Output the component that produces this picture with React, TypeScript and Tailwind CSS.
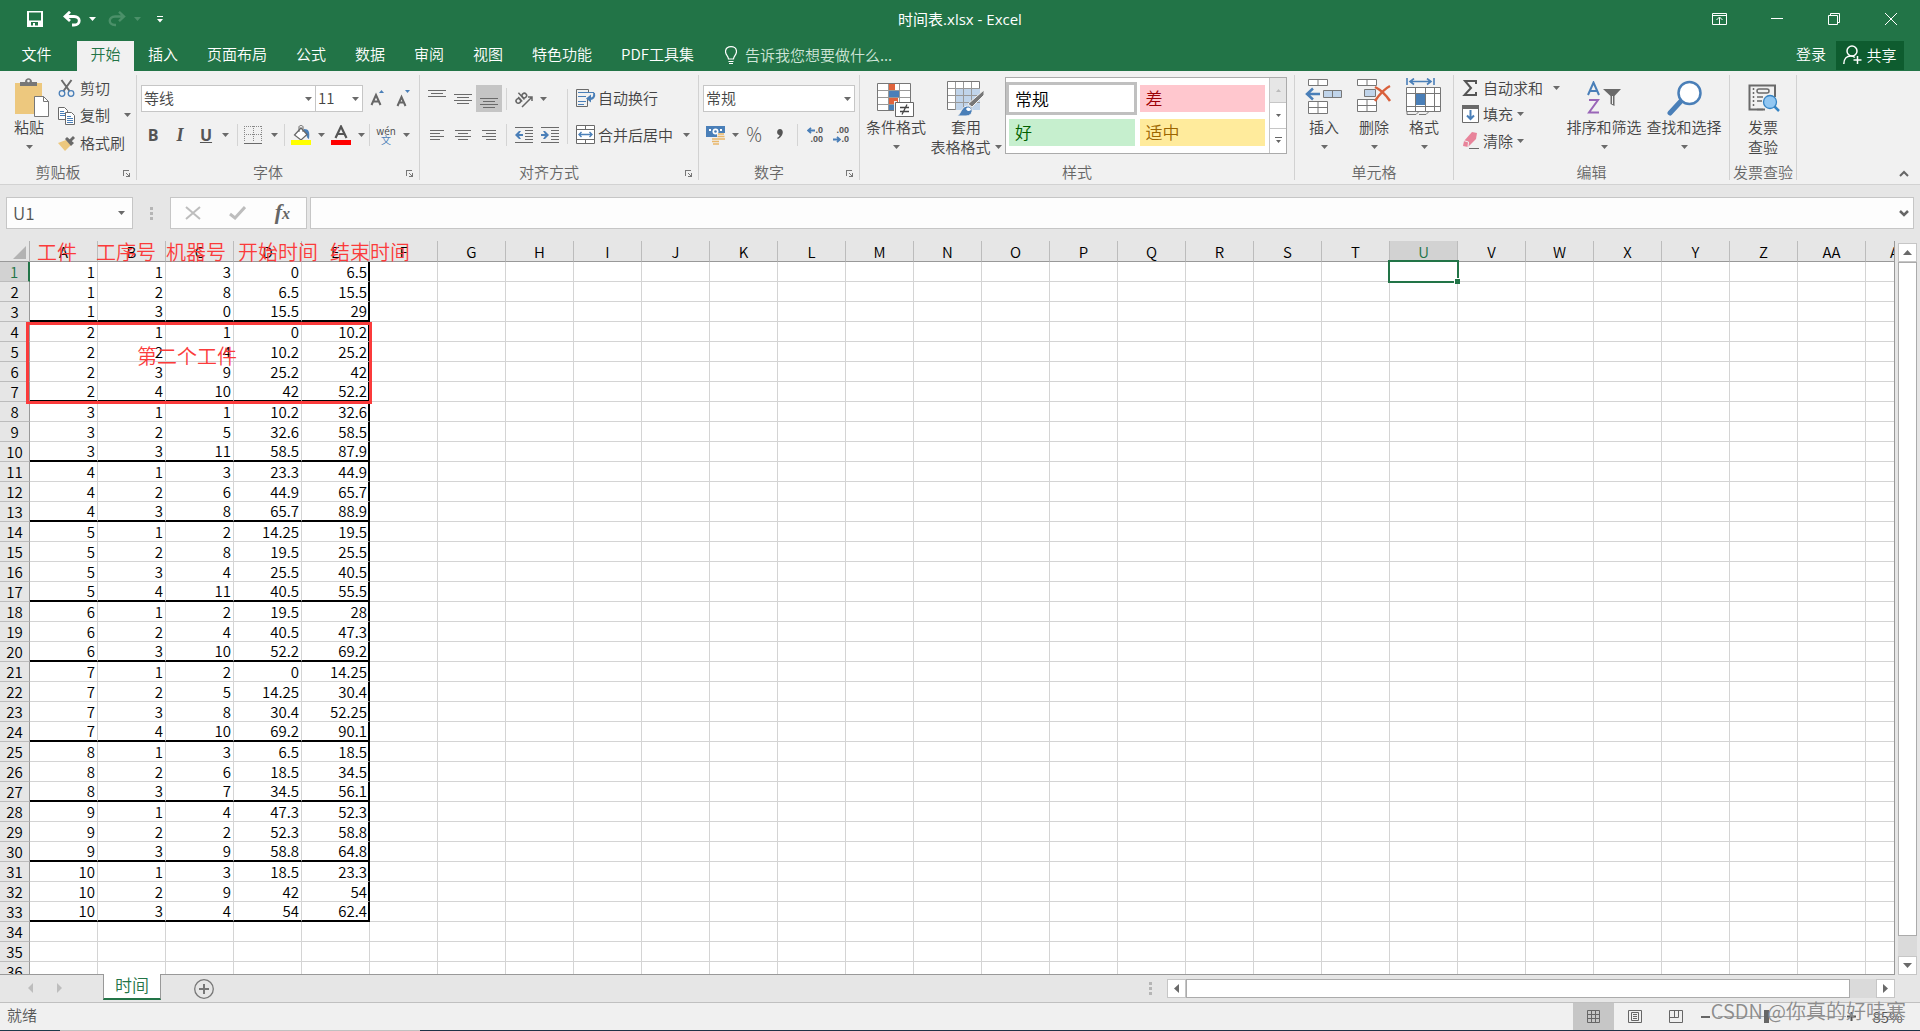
import type { ReactNode } from 'react';
import { clsx } from 'clsx';

type Job = [number, number, number, number, number];

const JOBS: Job[] = [
  [1, 1, 3, 0, 6.5],
  [1, 2, 8, 6.5, 15.5],
  [1, 3, 0, 15.5, 29],
  [2, 1, 1, 0, 10.2],
  [2, 2, 4, 10.2, 25.2],
  [2, 3, 9, 25.2, 42],
  [2, 4, 10, 42, 52.2],
  [3, 1, 1, 10.2, 32.6],
  [3, 2, 5, 32.6, 58.5],
  [3, 3, 11, 58.5, 87.9],
  [4, 1, 3, 23.3, 44.9],
  [4, 2, 6, 44.9, 65.7],
  [4, 3, 8, 65.7, 88.9],
  [5, 1, 2, 14.25, 19.5],
  [5, 2, 8, 19.5, 25.5],
  [5, 3, 4, 25.5, 40.5],
  [5, 4, 11, 40.5, 55.5],
  [6, 1, 2, 19.5, 28],
  [6, 2, 4, 40.5, 47.3],
  [6, 3, 10, 52.2, 69.2],
  [7, 1, 2, 0, 14.25],
  [7, 2, 5, 14.25, 30.4],
  [7, 3, 8, 30.4, 52.25],
  [7, 4, 10, 69.2, 90.1],
  [8, 1, 3, 6.5, 18.5],
  [8, 2, 6, 18.5, 34.5],
  [8, 3, 7, 34.5, 56.1],
  [9, 1, 4, 47.3, 52.3],
  [9, 2, 2, 52.3, 58.8],
  [9, 3, 9, 58.8, 64.8],
  [10, 1, 3, 18.5, 23.3],
  [10, 2, 9, 42, 54],
  [10, 3, 4, 54, 62.4],
];

const COLUMNS = [...'ABCDEFGHIJKLMNOPQRSTUVWXYZ', 'AA', 'AB'];
const ROW_COUNT = 36;
const ACTIVE_COLUMN = 'U';
const ACTIVE_ROW = 1;

const TABS = ['插入', '页面布局', '公式', '数据', '审阅', '视图', '特色功能', 'PDF工具集'];

/* ---------- small pieces ---------- */

function Caret({ className = 'text-[#6a6a6a]' }: { className?: string }) {
  return (
    <svg width="7" height="4" viewBox="0 0 7 4" className={clsx('shrink-0', className)} aria-hidden="true">
      <path d="M0 0h7L3.5 4z" fill="currentColor" />
    </svg>
  );
}

function CaretButton({ label, className = 'w-3' }: { label: string; className?: string }) {
  return (
    <button type="button" aria-label={label} className={clsx('flex h-6 shrink-0 items-center justify-center', className)}>
      <Caret />
    </button>
  );
}

function IconButton({
  label,
  className = 'w-[26px]',
  children,
}: {
  label: string;
  className?: string;
  children: ReactNode;
}) {
  return (
    <button
      type="button"
      aria-label={label}
      className={clsx('flex h-[27px] shrink-0 items-center justify-center', className)}
    >
      {children}
    </button>
  );
}

function Divider({ className = 'mx-1 h-[22px]' }: { className?: string }) {
  return <span className={clsx('w-px shrink-0 bg-[#d4d4d4]', className)} />;
}

function Group({
  title,
  launcher = false,
  className,
  children,
}: {
  title: string;
  launcher?: boolean;
  className: string;
  children: ReactNode;
}) {
  return (
    <section
      aria-label={title}
      className={clsx('flex h-[105px] shrink-0 flex-col border-r border-[#d2d2d2]', className)}
    >
      <div className="flex h-[87px] items-start">{children}</div>
      <div className="flex h-[18px] items-center pt-px">
        <span className="flex-1 text-center whitespace-nowrap text-[#666]">{title}</span>
        {launcher ? (
          <button type="button" aria-label={`${title}设置`} className="mr-[6px] ml-[7px] pt-1">
            <svg width="7" height="7" viewBox="0 0 7 7" fill="none" stroke="#777" shapeRendering="crispEdges">
              <path d="M.5 6V.5H6M3 3l3 3M6.5 3v3.5H3" />
            </svg>
          </button>
        ) : null}
      </div>
    </section>
  );
}

function BigButton({
  icon,
  lines,
  caret = 'below',
  className,
}: {
  icon: ReactNode;
  lines: string[];
  caret?: 'below' | 'inline' | 'none';
  className: string;
}) {
  return (
    <button type="button" className={clsx('flex shrink-0 flex-col items-center', className)}>
      <span className="flex h-[42px] items-end justify-center">{icon}</span>
      <span className="leading-[19px] whitespace-nowrap">{lines[0]}</span>
      <span className="flex h-[21px] items-center gap-1 leading-[21px] whitespace-nowrap">
        {lines[1]}
        {caret === 'none' ? null : <Caret />}
      </span>
    </button>
  );
}

function LineIcon({ lines, children }: { lines: Array<[number, number, number]>; children?: ReactNode }) {
  return (
    <svg width="18" height="18" viewBox="0 0 18 18" shapeRendering="crispEdges" aria-hidden="true">
      {lines.map(([x, y, w]) => (
        <rect key={`${x}-${y}`} x={x} y={y} width={w} height="1" fill="#6a6a6a" />
      ))}
      {children}
    </svg>
  );
}

/* ---------- icons ---------- */

function PasteIcon() {
  return (
    <svg width="36" height="39" viewBox="0 0 36 39" className="ml-[6px]">
      <path d="M1 5h27v31H1z" fill="#edc87e" />
      <path d="M6 8V4h5c0-5 7-5 7 0h5v4z" fill="#777" />
      <circle cx="14.500" cy="3" r="1.300" fill="#f1f1f1" />
      <path d="M20.500 18.500h9l5 5v15h-14z" fill="#fff" stroke="#777" />
      <path d="M29.500 18.500v5h5" fill="none" stroke="#777" />
    </svg>
  );
}

function ScissorsIcon() {
  return (
    <svg width="18" height="19" viewBox="0 0 18 19" fill="none">
      <path d="M3.500 1l8 11M13.500 1l-8 11" stroke="#6a6a6a" strokeWidth="2" />
      <circle cx="4" cy="14.500" r="2.800" stroke="#4a7fb8" strokeWidth="1.300" />
      <circle cx="13" cy="14.500" r="2.800" stroke="#4a7fb8" strokeWidth="1.300" />
    </svg>
  );
}

function CopyIcon() {
  return (
    <svg width="18" height="19" viewBox="0 0 18 19" fill="#fff" stroke="#6a6a6a">
      <path d="M.5 1.500h6l3 3v9h-9z" />
      <path d="M2 5.500h4M2 7.500h5M2 9.500h5" stroke="#4a7fb8" />
      <path d="M7.500 6.500h6l3 3v9h-9z" />
      <path d="M9 10.500h4M9 12.500h6M9 14.500h6M9 16.500h6" stroke="#4a7fb8" />
    </svg>
  );
}

function BrushIcon() {
  return (
    <svg width="18" height="16" viewBox="0 0 18 16">
      <path d="M0 8l8-3 5 5-6 6z" fill="#edc87e" />
      <path d="M7 4l2-2 7 6-3 3z" fill="#6a6a6a" />
      <path d="M11 5l4-4 2 2-4 4z" fill="#6a6a6a" />
    </svg>
  );
}

function FontSizeIcon({ up }: { up: boolean }) {
  return (
    <svg width="16" height="18" viewBox="0 0 16 18">
      <path
        d={up ? 'M3.500 15L8 5l4.500 10M5 11.500h6' : 'M3.500 16L7.500 7l4 9M5 12.500h5'}
        fill="none"
        stroke="#666"
        strokeWidth="2"
      />
      <path d={up ? 'M11 3h5l-2.500-3z' : 'M11 0h5l-2.500 3z'} fill="#4a7fb8" />
    </svg>
  );
}

function BorderIcon() {
  return (
    <svg width="18" height="18" viewBox="0 0 18 18" fill="none" stroke="#888" shapeRendering="crispEdges">
      <path d="M.5 0v16M17.500 0v16M9 0v16M0 .5h18M0 8.500h18" strokeDasharray="1 1" />
      <path d="M0 17h18" stroke="#6a6a6a" />
    </svg>
  );
}

function FillIcon() {
  return (
    <svg width="20" height="20" viewBox="0 0 20 20">
      <path d="M13 4c5 0 6 3 5 10-3-1-2-5-5-8z" fill="#4a7fb8" />
      <path d="M3.500 10L10 3l6 6.500-6 5.500z" fill="#fff" stroke="#666" strokeWidth="1.200" />
      <path d="M8 7V2c0-2 4-2 4 0v5" fill="none" stroke="#666" />
      <path d="M0 15h20v5H0z" fill="#ff0" />
    </svg>
  );
}

function FontColorIcon() {
  return (
    <svg width="20" height="20" viewBox="0 0 20 20">
      <path d="M4.500 13L10 1.500 15.500 13M6.500 9h7" fill="none" stroke="#555" strokeWidth="2.200" />
      <path d="M0 15h20v5H0z" fill="#f00" />
    </svg>
  );
}

function OrientationIcon() {
  return (
    <svg width="20" height="18" viewBox="0 0 20 18" fill="none" stroke="#666" strokeWidth="1.500">
      <g transform="rotate(-42 8 9)">
        <circle cx="4" cy="8" r="2.300" />
        <path d="M6.500 5v6M9.500 2v9" />
        <circle cx="12" cy="8" r="2.300" />
      </g>
      <path d="M8 17L18 7M14 7h4v4" />
    </svg>
  );
}

function IndentIcon({ out }: { out: boolean }) {
  return (
    <LineIcon
      lines={[
        [0, 1, 18],
        [10, 4, 8],
        [10, 7, 8],
        [10, 10, 8],
        [10, 13, 8],
        [0, 16, 18],
      ]}
    >
      <path
        d={out ? 'M0 9l4-4h2L4 8h4v2H4l2 3H4z' : 'M8 9L4 5H2l2 3H0v2h4l-2 3h2z'}
        fill="#4a7fb8"
        shapeRendering="auto"
      />
    </LineIcon>
  );
}

function WrapIcon() {
  return (
    <svg width="20" height="19" viewBox="0 0 20 19" fill="none">
      <path d="M12.500 3V.5H.5v17h11V10" stroke="#6a6a6a" />
      <path d="M2 3.500h16M2 7.500h8M2 12.500h8M2 15.500h6" stroke="#4a7fb8" />
      <path d="M18 4c1 4-1 6-5 6" stroke="#4a7fb8" strokeWidth="2" />
      <path d="M10 9.500l5-4v8z" fill="#4a7fb8" />
    </svg>
  );
}

function MergeIcon() {
  return (
    <svg width="20" height="19" viewBox="0 0 20 19" fill="#fff" stroke="#6a6a6a">
      <path d="M.5.5h18v18H.5zM.5 4.500h18M.5 14.500h18M9.500.5v4M9.500 14.500v4" />
      <path d="M3 9.500h13M5.500 7L3 9.500 5.500 12M13.500 7L16 9.500 13.500 12" fill="none" stroke="#4a7fb8" strokeWidth="1.400" />
    </svg>
  );
}

function MoneyIcon() {
  return (
    <svg width="20" height="20" viewBox="0 0 20 20">
      <path d="M0 1h19v11H0z" fill="#4a7fb8" />
      <path d="M3 4h2v2H3zM14 4h2v2h-2z" fill="#fff" />
      <circle cx="9.500" cy="6.500" r="3" fill="#fff" />
      <circle cx="9.500" cy="6.500" r="1.300" fill="#4a7fb8" />
      <path d="M11 8h8v11H5v-6h6z" fill="#f1f1f1" />
      <path d="M12 9h6M11.500 11.500h7M12 14h7M6 14h7M6 16.500h7M7 19h6" stroke="#e9b76a" strokeWidth="1.700" />
    </svg>
  );
}

function DecimalArrow({ left = false }: { left?: boolean }) {
  return (
    <svg width="8" height="7" viewBox="0 0 8 7">
      <path
        d={left ? 'M8 3.500H1M4 .8L1 3.500l3 2.700' : 'M0 3.500h7M4 .8l3 2.700-3 2.700'}
        fill="none"
        stroke="#4a7fb8"
        strokeWidth="1.800"
      />
    </svg>
  );
}

function DecimalIcon({ increase }: { increase: boolean }) {
  return (
    <span className="flex w-4 flex-col text-right font-['Liberation_Sans'] text-[9px] leading-[9px] font-bold text-[#555]">
      <span className="flex items-center justify-end">
        {increase ? <DecimalArrow left /> : null}
        {increase ? '.0' : '.00'}
      </span>
      <span className="flex items-center justify-end">
        {increase ? null : <DecimalArrow />}
        {increase ? '.00' : '.0'}
      </span>
    </span>
  );
}

function ConditionalIcon() {
  return (
    <svg width="38" height="34" viewBox="0 0 38 34">
      <path d="M.5.500h33v27H.5z" fill="#fff" stroke="#777" />
      <path d="M11.500 1v26M22.500 1v26M1 7.500h32M1 14.500h32M1 21.500h32" stroke="#999" />
      <path d="M12 1h6v6h-6zM12 15h9v6h-9z" fill="#e0633c" />
      <path d="M12 8h10v6H12zM12 22h5v5h-5z" fill="#4a7fb8" />
      <path d="M17 18h3v10h-3z" fill="#f1f1f1" />
      <path d="M18.500 19.500h18v14h-18z" fill="#fff" stroke="#666" />
      <path d="M23 24.500h9M23 28.500h9M30 21.500l-5 10" stroke="#444" strokeWidth="1.300" />
    </svg>
  );
}

function TableStyleIcon() {
  return (
    <svg width="38" height="36" viewBox="0 0 38 36">
      <path d="M.5.500h32v28H.5z" fill="#fff" stroke="#777" />
      <path d="M9 8h24v21H9z" fill="#c0d4ea" />
      <path d="M8.500 1v28M16.500 1v28M24.500 1v28M1 7.500h32M1 14.500h32M1 21.500h32" stroke="#999" />
      <path d="M37 9v5L25 26l-4-3z" fill="#777" stroke="#f1f1f1" />
      <path d="M10 35c4-1 4-11 12-10 5 2 4 10-3 10z" fill="#4a7fb8" stroke="#f1f1f1" />
      <path d="M19 28c2-3 5-1 5 1-2 2-4 1-5-1z" fill="#fff" />
    </svg>
  );
}

function InsertIcon() {
  return (
    <svg width="38" height="36" viewBox="0 0 38 36" fill="#fff" stroke="#777" className="mb-[2px]">
      <path d="M3.500.5h19v6h-19zM13 .5v6M3.500 22.500h19v12h-19zM13 22.500v12M3.500 28.500h19" />
      <path d="M18.500 11.500h18v7h-18zM27.500 11.500v7" fill="#c0d4ea" />
      <path d="M15 15H2M8 9.500L2 15l6 5.500" fill="none" stroke="#4a7fb8" strokeWidth="2.500" />
    </svg>
  );
}

function DeleteIcon() {
  return (
    <svg width="38" height="36" viewBox="0 0 38 36" fill="#fff" stroke="#777" className="mb-[2px]">
      <path d="M2.500.5h19v6h-19zM12 .5v6M2.500 20.500h19v12h-19zM12 20.500v12M2.500 26.500h19" />
      <path d="M9.500 10.500h11v7h-11z" fill="#c0d4ea" />
      <path d="M20 8c6 3 11 8 15 14M35 7c-6 3-11 9-15 15" fill="none" stroke="#d9603b" strokeWidth="2.500" />
    </svg>
  );
}

function FormatIcon() {
  return (
    <svg width="36" height="38" viewBox="0 0 36 38" fill="#fff" stroke="#777" className="mb-px">
      <path d="M1 0v7M28 0v7M4 3.500h21M8 .5l-4 3 4 3M21 .5l4 3-4 3" fill="none" stroke="#4a7fb8" strokeWidth="1.600" />
      <path d="M.5 9.500h34v24H.5zM9.500 9.500v24M19.500 9.500v24M28.500 9.500v24M.5 15.500h34M.5 28.500h34" />
      <path d="M10 16h9v11h-9z" fill="#4a7fb8" stroke="none" />
      <path d="M1 33.500v3h9l3-3M13 36.500h7l3-3" fill="none" />
    </svg>
  );
}

function SortIcon() {
  return (
    <svg width="36" height="34" viewBox="0 0 36 34" fill="none" className="mb-[2px]">
      <path d="M2 14L7.500 1.500 13 14M4 10h7" stroke="#4a7fb8" strokeWidth="2" />
      <path d="M3 19h9L3 31.500h10" stroke="#9a66b8" strokeWidth="2" />
      <path d="M17 8h18l-6.500 7v10l-4-2v-8z" fill="#6a6a6a" />
      <path d="M26.500 15v8" stroke="#f1f1f1" />
    </svg>
  );
}

function FindIcon() {
  return (
    <svg width="36" height="36" viewBox="0 0 36 36" className="mb-px ml-[2px]">
      <path d="M3 33l12-13" stroke="#4a7fb8" strokeWidth="5" strokeLinecap="round" />
      <circle cx="22.500" cy="13" r="11" fill="#fff" stroke="#4a7fb8" strokeWidth="2.500" />
    </svg>
  );
}

function InvoiceIcon() {
  return (
    <svg width="32" height="28" viewBox="0 0 32 28" fill="none" className="mb-[5px] ml-px">
      <path d="M27 13V1.500H1.500v24H17" stroke="#6a6a6a" strokeWidth="2" />
      <path d="M5.500 4v20" stroke="#6a6a6a" strokeWidth="1.500" strokeDasharray="2 2" />
      <rect x="9" y="5" width="12" height="4" rx="2" stroke="#6a6a6a" strokeWidth="1.500" />
      <path d="M9 13h6M9 17h5M9 25.500h6" stroke="#6a6a6a" strokeWidth="1.500" />
      <path d="M26 22l5 5" stroke="#3584c4" strokeWidth="2.500" />
      <circle cx="22" cy="18" r="6.500" fill="#92c7f2" stroke="#3584c4" strokeWidth="1.300" />
    </svg>
  );
}

/* ---------- window chrome ---------- */

function TitleBar() {
  return (
    <header className="flex h-[41px] shrink-0 items-center bg-[#227447] pb-[3px] text-white">
      <div className="flex flex-1 items-center">
        <button type="button" aria-label="保存" className="ml-[27px]">
          <svg width="16" height="16" viewBox="0 0 16 16">
            <path d="M0 0h16v16H0zM2 1.500v8h12v-8zM4 11v3.500h2V12h2v2.500h3V11z" fill="#fff" fillRule="evenodd" />
          </svg>
        </button>
        <button type="button" aria-label="撤消" className="ml-5">
          <svg width="18" height="16" viewBox="0 0 18 16" fill="none" stroke="#fff" strokeWidth="2.800">
            <path d="M3 5.500h8c7 0 7 8.500 0 8.500H9M7 .8L2 5.500 7 10" />
          </svg>
        </button>
        <span className="ml-2">
          <Caret className="text-white" />
        </span>
        <button type="button" aria-label="恢复" disabled className="ml-3 text-[#4b9069]">
          <svg width="18" height="16" viewBox="0 0 18 16" fill="none" stroke="currentColor" strokeWidth="2.400">
            <path d="M15 5.500H7c-7 0-7 8.500 0 8.500h1M11 .8l5 4.700-5 4.700" />
          </svg>
        </button>
        <span className="ml-2">
          <Caret className="text-[#4b9069]" />
        </span>
        <button type="button" aria-label="自定义快速访问工具栏" className="ml-4">
          <svg width="6" height="7" viewBox="0 0 6 7" fill="#fff">
            <path d="M0 0h6v1H0zM0 3h6L3 6.500z" />
          </svg>
        </button>
      </div>
      <h1 className="font-['Open_Sans','Noto_Sans_CJK_SC',sans-serif] font-normal">时间表.xlsx - Excel</h1>
      <div className="flex flex-1 items-center justify-end">
        <button type="button" aria-label="功能区显示选项" className="mr-11">
          <svg width="15" height="12" viewBox="0 0 15 12" fill="none" stroke="#fff">
            <path d="M.5.500h14v11H.5zM.5 2.500h14M7.500 11V4.500M4.500 7l3-3 3 3" />
          </svg>
        </button>
        <button type="button" aria-label="最小化" className="mr-[45px]">
          <svg width="12" height="12" viewBox="0 0 12 12" stroke="#fff">
            <path d="M0 5.500h12" />
          </svg>
        </button>
        <button type="button" aria-label="向下还原" className="mr-[45px]">
          <svg width="12" height="12" viewBox="0 0 12 12" fill="none" stroke="#fff">
            <path d="M.5 2.500h9v9h-9zM2.500 2V.5h9v9H10" />
          </svg>
        </button>
        <button type="button" aria-label="关闭" className="mr-[23px]">
          <svg width="12" height="12" viewBox="0 0 12 12" stroke="#fff">
            <path d="M0 0l12 12M12 0L0 12" />
          </svg>
        </button>
      </div>
    </header>
  );
}

function RibbonTabs() {
  return (
    <nav className="flex h-[30px] shrink-0 bg-[#227447] text-white">
      <button type="button" className="w-[77px] pr-1 pb-1 text-center">
        文件
      </button>
      <button type="button" className="w-[57px] bg-[#f1f1f1] pb-1 text-center text-[#227447]">
        开始
      </button>
      {TABS.map((tab) => (
        <button key={tab} type="button" className="mr-px px-[14px] pb-1">
          {tab}
        </button>
      ))}
      <button type="button" className="ml-4 flex items-center gap-2 pb-[2px] text-[#cfe5d8]">
        <svg width="12" height="18" viewBox="0 0 12 18" fill="none" stroke="#fff">
          <path d="M3.500 13c0-3-3-4-3-7.500 0-6.500 11-6.500 11 0 0 3.500-3 4.500-3 7.500zM3.500 15.500h5M4 17.500h4" strokeWidth="1.200" />
        </svg>
        告诉我您想要做什么...
      </button>
      <button type="button" className="mr-[10px] ml-auto pb-1">
        登录
      </button>
      <button type="button" className="mr-4 mb-px flex w-[68px] items-center justify-center gap-1 bg-[#0e5c2f] pb-[2px]">
        <svg width="19" height="20" viewBox="0 0 19 20" fill="none" stroke="#fff" strokeWidth="1.500">
          <circle cx="9" cy="6" r="5" />
          <path d="M.8 19c0-5 3-8 7-8 2 0 3 .500 4 1.500M14.500 11v8M10.500 15h8" />
        </svg>
        共享
      </button>
    </nav>
  );
}

function ComboBox({ label, value, className }: { label: string; value: string; className: string }) {
  return (
    <label className={clsx('relative flex h-[27px] shrink-0 items-center', className)}>
      <select
        aria-label={label}
        defaultValue={value}
        className="h-full w-full appearance-none border border-[#c6c6c6] bg-white pb-px pl-[2px] text-[#444]"
      >
        <option>{value}</option>
      </select>
      <span className="pointer-events-none absolute right-1 flex">
        <Caret />
      </span>
    </label>
  );
}

function ClipboardGroup() {
  return (
    <Group title="剪贴板" launcher className="w-[137px]">
      <BigButton icon={<PasteIcon />} lines={['粘贴']} className="ml-2 w-[42px]" />
      <div className="ml-2 flex flex-col">
        <button type="button" className="flex h-[26px] items-center gap-1">
          <ScissorsIcon />
          剪切
        </button>
        <button type="button" className="flex h-7 items-center gap-1">
          <CopyIcon />
          复制
          <span className="ml-[10px] flex">
            <Caret />
          </span>
        </button>
        <button type="button" className="flex h-7 items-center gap-1">
          <BrushIcon />
          格式刷
        </button>
      </div>
    </Group>
  );
}

function FontGroup() {
  return (
    <Group title="字体" launcher className="w-[283px]">
      <div className="flex flex-col gap-[9px] pt-[10px] pl-1">
        <div className="flex items-center">
          <ComboBox label="字体" value="等线" className="w-[175px]" />
          <ComboBox label="字号" value="11" className="-ml-px w-[48px]" />
          <IconButton label="增大字号">
            <FontSizeIcon up />
          </IconButton>
          <IconButton label="减小字号">
            <FontSizeIcon up={false} />
          </IconButton>
        </div>
        <div className="flex items-center">
          <IconButton label="加粗" className="w-6 font-['Open_Sans'] text-base font-bold text-[#555]">
            B
          </IconButton>
          <IconButton label="倾斜" className="w-[30px] font-['Liberation_Serif'] text-lg font-bold text-[#555] italic">
            I
          </IconButton>
          <IconButton label="下划线" className="w-[22px] font-['Open_Sans'] text-base font-bold text-[#555] underline">
            U
          </IconButton>
          <CaretButton label="下划线选项" className="w-4" />
          <Divider className="mr-[2px] ml-1 h-[22px]" />
          <IconButton label="边框">
            <BorderIcon />
          </IconButton>
          <CaretButton label="边框选项" className="w-4" />
          <Divider className="mx-[2px] h-[22px]" />
          <IconButton label="填充颜色" className="w-7">
            <FillIcon />
          </IconButton>
          <CaretButton label="填充颜色选项" />
          <IconButton label="字体颜色" className="w-7">
            <FontColorIcon />
          </IconButton>
          <CaretButton label="字体颜色选项" />
          <Divider className="mr-1 ml-[2px] h-[22px]" />
          <IconButton label="拼音" className="w-6 flex-col text-[10px] leading-[9px] text-[#444]">
            <span>wén</span>
            <span className="text-[#4a7fb8]">文</span>
          </IconButton>
          <CaretButton label="拼音选项" className="w-4" />
        </div>
      </div>
    </Group>
  );
}

function AlignmentGroup() {
  return (
    <Group title="对齐方式" launcher className="w-[279px]">
      <div className="flex flex-col gap-[9px] pt-[10px] pl-1">
        <div className="flex items-center">
          <IconButton label="顶端对齐">
            <LineIcon lines={[[0, 0, 18], [3, 3, 12], [0, 6, 18]]} />
          </IconButton>
          <IconButton label="垂直居中">
            <LineIcon lines={[[0, 4, 18], [3, 7, 12], [0, 10, 18], [3, 13, 12]]} />
          </IconButton>
          <IconButton label="底端对齐" className="w-[26px] bg-[#c5c5c5]">
            <LineIcon lines={[[0, 8, 18], [3, 11, 12], [0, 14, 18], [3, 17, 12]]} />
          </IconButton>
          <Divider />
          <IconButton label="方向">
            <OrientationIcon />
          </IconButton>
          <CaretButton label="方向选项" />
        </div>
        <div className="flex items-center">
          <IconButton label="左对齐">
            <LineIcon lines={[[2, 4, 14], [2, 7, 10], [2, 10, 14], [2, 13, 10]]} />
          </IconButton>
          <IconButton label="居中">
            <LineIcon lines={[[1, 4, 16], [4, 7, 10], [1, 10, 16], [4, 13, 10]]} />
          </IconButton>
          <IconButton label="右对齐">
            <LineIcon lines={[[2, 4, 14], [6, 7, 10], [2, 10, 14], [6, 13, 10]]} />
          </IconButton>
          <Divider />
          <IconButton label="减少缩进量">
            <IndentIcon out />
          </IconButton>
          <IconButton label="增加缩进量">
            <IndentIcon out={false} />
          </IconButton>
        </div>
      </div>
      <Divider className="mt-[14px] mr-2 ml-1 h-[55px]" />
      <div className="flex flex-col gap-[9px] pt-[10px]">
        <button type="button" className="flex h-[27px] items-center gap-[2px] pb-px">
          <WrapIcon />
          自动换行
        </button>
        <div className="flex items-center">
          <button type="button" className="flex h-[27px] items-center gap-[2px]">
            <MergeIcon />
            合并后居中
          </button>
          <CaretButton label="合并选项" className="ml-[3px] w-5" />
        </div>
      </div>
    </Group>
  );
}

function NumberGroup() {
  return (
    <Group title="数字" launcher className="w-[161px]">
      <div className="flex flex-col gap-[9px] pt-[10px] pl-1">
        <ComboBox label="数字格式" value="常规" className="w-[152px]" />
        <div className="flex items-center">
          <IconButton label="会计数字格式">
            <MoneyIcon />
          </IconButton>
          <CaretButton label="会计格式选项" />
          <IconButton label="百分比样式" className="w-[26px] font-['Open_Sans'] text-[20px] text-[#555]">
            %
          </IconButton>
          <IconButton label="千位分隔样式">
            <svg width="6" height="11" viewBox="0 0 6 11" fill="#555">
              <path d="M3 0c4 0 4 7-2 10L0 9c2-1 2.500-2 2.500-3C-1 6-.500 0 3 0z" />
            </svg>
          </IconButton>
          <Divider />
          <IconButton label="增加小数位数">
            <DecimalIcon increase />
          </IconButton>
          <IconButton label="减少小数位数">
            <DecimalIcon increase={false} />
          </IconButton>
        </div>
      </div>
    </Group>
  );
}

function StylesGroup() {
  return (
    <Group title="样式" className="w-[435px]">
      <BigButton icon={<ConditionalIcon />} lines={['条件格式']} className="ml-1 w-[64px]" />
      <BigButton
        icon={<TableStyleIcon />}
        lines={['套用', '表格格式']}
        caret="inline"
        className="ml-[2px] w-[72px]"
      />
      <div className="mt-[2px] ml-[3px] flex h-[77px] w-[282px] border border-[#ababab] bg-white text-[17px]">
        <div className="grid flex-1 grid-cols-2 gap-x-[2px] py-1">
          <button type="button" className="h-[33px] border-[3px] border-[#c0c0c0] pl-[6px] text-left text-black">
            常规
          </button>
          <button type="button" className="mt-[3px] mr-1 ml-px h-[27px] bg-[#ffc7ce] pb-px pl-[6px] text-left text-[#9c0006]">
            差
          </button>
          <button type="button" className="mr-[2px] ml-[3px] h-[27px] bg-[#c6efce] pb-px pl-[6px] text-left text-[#006100]">
            好
          </button>
          <button type="button" className="mr-1 ml-px h-[27px] bg-[#ffeb9c] pb-px pl-[6px] text-left text-[#9c6500]">
            适中
          </button>
        </div>
        <div className="flex w-[17px] flex-col border-l border-[#c6c6c6]">
          <button type="button" aria-label="上一行" className="flex flex-1 items-center justify-center bg-[#e6e6e6]">
            <svg width="5" height="3" viewBox="0 0 5 3" fill="#bbb">
              <path d="M0 3h5L2.500 0z" />
            </svg>
          </button>
          <button
            type="button"
            aria-label="下一行"
            className="flex flex-1 items-center justify-center border-y border-[#c6c6c6]"
          >
            <svg width="5" height="3" viewBox="0 0 5 3" fill="#666">
              <path d="M0 0h5L2.500 3z" />
            </svg>
          </button>
          <button type="button" aria-label="其他样式" className="flex flex-1 items-center justify-center">
            <svg width="7" height="7" viewBox="0 0 7 7" fill="#666">
              <path d="M0 0h7v1H0zM1 3h5L3.500 6z" />
            </svg>
          </button>
        </div>
      </div>
    </Group>
  );
}

function EditingGroup() {
  return (
    <Group title="编辑" className="w-[276px]">
      <div className="ml-2 flex w-[100px] flex-col">
        <button type="button" className="flex h-[25px] items-center whitespace-nowrap">
          <svg width="21" height="16" viewBox="0 0 21 16" fill="none" stroke="#555" strokeWidth="2">
            <path d="M14 4V1H3l6 7-6.500 7H14v-3" />
          </svg>
          自动求和
          <span className="ml-[10px]">
            <Caret />
          </span>
        </button>
        <button type="button" className="flex h-[27px] items-center gap-1">
          <svg width="17" height="18" viewBox="0 0 17 18">
            <path d="M.5.500h16v17H.5z" fill="#fff" stroke="#6a6a6a" />
            <path d="M0 0h17v4H0z" fill="#6a6a6a" />
            <path d="M8.500 5v9M5 10.500L8.500 14l3.500-3.500" fill="none" stroke="#4a7fb8" strokeWidth="2" />
          </svg>
          填充
          <Caret />
        </button>
        <button type="button" className="flex h-[27px] items-center gap-1">
          <svg width="17" height="17" viewBox="0 0 17 17">
            <path d="M10 0l5 1-1 6-8 8-5-1 1-5z" fill="#e8839a" />
            <path d="M1.500 8.500l5 1.500-.5 5" fill="none" stroke="#f1f1f1" />
            <path d="M7 16.500h10" stroke="#6a6a6a" />
          </svg>
          清除
          <Caret />
        </button>
      </div>
      <BigButton icon={<SortIcon />} lines={['排序和筛选']} className="ml-[2px] w-[80px]" />
      <BigButton icon={<FindIcon />} lines={['查找和选择']} className="w-[80px]" />
    </Group>
  );
}

function Ribbon() {
  return (
    <div className="flex h-[114px] shrink-0 items-start border-b border-[#d2d2d2] bg-[#f1f1f1] pt-1 text-[#444]">
      <ClipboardGroup />
      <FontGroup />
      <AlignmentGroup />
      <NumberGroup />
      <StylesGroup />
      <Group title="单元格" className="w-[159px]">
        <BigButton icon={<InsertIcon />} lines={['插入']} className="ml-1 w-[50px]" />
        <BigButton icon={<DeleteIcon />} lines={['删除']} className="w-[50px]" />
        <BigButton icon={<FormatIcon />} lines={['格式']} className="w-[50px]" />
      </Group>
      <EditingGroup />
      <Group title="发票查验" className="w-[67px]">
        <BigButton icon={<InvoiceIcon />} lines={['发票', '查验']} caret="none" className="w-[66px]" />
      </Group>
      <button type="button" aria-label="折叠功能区" className="mr-[11px] mb-[7px] ml-auto self-end">
        <svg width="10" height="7" viewBox="0 0 10 7" fill="none" stroke="#666" strokeWidth="2">
          <path d="M1 6l4-4 4 4" />
        </svg>
      </button>
    </div>
  );
}

function FormulaBar() {
  return (
    <div className="flex h-14 shrink-0 items-center bg-[#e6e6e6] px-[6px] text-[17px] text-[#555]">
      <label className="relative flex h-8 w-[127px] items-center">
        <input
          aria-label="名称框"
          defaultValue="U1"
          className="h-full w-full border border-[#c6c6c6] bg-[#fdfdfd] pb-[2px] pl-[6px]"
        />
        <span className="pointer-events-none absolute right-2 flex">
          <Caret />
        </span>
      </label>
      <span className="mx-[17px] flex w-[3px] flex-col gap-[2px]">
        <i className="h-[3px] bg-[#b5b5b5]" />
        <i className="h-[3px] bg-[#b5b5b5]" />
        <i className="h-[3px] bg-[#b5b5b5]" />
      </span>
      <div className="flex h-8 w-[137px] items-center justify-between border border-[#c6c6c6] bg-[#fdfdfd] pr-4 pl-[14px]">
        <button type="button" aria-label="取消">
          <svg width="16" height="14" viewBox="0 0 16 14" stroke="#bdbdbd" strokeWidth="2">
            <path d="M1 1l14 12M15 1L1 13" />
          </svg>
        </button>
        <button type="button" aria-label="输入">
          <svg width="17" height="14" viewBox="0 0 17 14" fill="none" stroke="#bdbdbd" strokeWidth="3">
            <path d="M1 8l5 4L16 1" />
          </svg>
        </button>
        <button
          type="button"
          aria-label="插入函数"
          className="pb-[2px] font-['Liberation_Serif'] text-[22px] leading-none font-bold text-[#666] italic"
        >
          f<span className="text-[16px]">x</span>
        </button>
      </div>
      <label className="relative ml-[3px] flex h-8 flex-1 items-center">
        <input aria-label="编辑栏" className="h-full w-full border border-[#c6c6c6] bg-[#fdfdfd] px-2" />
        <svg
          width="10"
          height="7"
          viewBox="0 0 10 7"
          fill="none"
          stroke="#666"
          strokeWidth="2.500"
          className="pointer-events-none absolute right-[5px]"
        >
          <path d="M1 1l4 4 4-4" />
        </svg>
      </label>
    </div>
  );
}

/* ---------- sheet ---------- */

function SheetTable() {
  return (
    <table className="w-[1934px] table-fixed border-separate border-spacing-0 bg-white text-[15px] leading-[18px] text-black">
      <colgroup>
        <col className="w-[30px]" />
        {COLUMNS.map((name) => (
          <col key={name} className="w-[68px]" />
        ))}
      </colgroup>
      <thead>
        <tr className="h-[21px] bg-[#e6e6e6]">
          <th className="border-r border-b border-[#b0b0b0] border-b-[#999] p-0">
            <svg width="13" height="13" viewBox="0 0 13 13" className="mt-[2px] ml-[13px]">
              <path d="M13 0v13H0z" fill="#b3b3b3" />
            </svg>
          </th>
          {COLUMNS.map((name) => (
            <th
              key={name}
              scope="col"
              className={clsx(
                'border-r border-b border-r-[#bcbcbc] p-0 pt-px text-center font-[350]',
                name === ACTIVE_COLUMN ? 'border-b-[#227447] bg-[#d2d2d2] text-[#227447]' : 'border-b-[#999]',
              )}
            >
              {name}
            </th>
          ))}
        </tr>
      </thead>
      <tbody>
        {Array.from({ length: ROW_COUNT }, (_, index) => {
          const row = index + 1;
          const job = JOBS[index];
          const lastOfJob = job !== undefined && JOBS[index + 1]?.[0] !== job[0];
          return (
            <tr key={row} className="h-5">
              <th
                scope="row"
                className={clsx(
                  'border-b border-b-[#bcbcbc] p-0 pt-px text-center font-[350]',
                  row === ACTIVE_ROW
                    ? 'border-r-2 border-r-[#227447] bg-[#d2d2d2] text-[#227447]'
                    : 'border-r border-r-[#999] bg-[#e6e6e6]',
                )}
              >
                {row}
              </th>
              {COLUMNS.map((name, column) => (
                <td
                  key={name}
                  className={clsx(
                    'p-0 text-right',
                    lastOfJob && column < 5 ? 'border-b-2 border-b-black' : 'border-b border-b-[#d4d4d4] pt-px',
                    job && column === 4 ? 'border-r-2 border-r-black pr-px' : 'border-r border-r-[#d4d4d4] pr-[2px]',
                  )}
                >
                  {job && column < 5 ? job[column] : null}
                </td>
              ))}
            </tr>
          );
        })}
      </tbody>
    </table>
  );
}

function Annotations() {
  return (
    <div className="pointer-events-none text-[20px] leading-[22px] whitespace-nowrap text-[#fb3b3b]">
      <span className="absolute top-0 left-[37px]">工件</span>
      <span className="absolute top-0 left-[96px]">工序号</span>
      <span className="absolute top-0 left-[166px]">机器号</span>
      <span className="absolute top-0 left-[238px]">开始时间</span>
      <span className="absolute top-0 left-[330px]">结束时间</span>
      <span className="absolute top-[104px] left-[137px]">第二个工件</span>
      <span className="absolute top-[81px] left-[26px] h-[82px] w-[346px] border-[3px] border-[#fb3b3b]" />
    </div>
  );
}

function ScrollArrow({ label, d }: { label: string; d: string }) {
  return (
    <button
      type="button"
      aria-label={label}
      className="flex h-[19px] w-[19px] shrink-0 items-center justify-center border border-[#c6c6c6] bg-white"
    >
      <svg width="9" height="9" viewBox="0 0 9 9" fill="#6a6a6a">
        <path d={d} />
      </svg>
    </button>
  );
}

function Sheet() {
  return (
    <main className="flex min-h-0 flex-1 bg-[#e6e6e6]">
      <div className="relative min-w-0 flex-1 overflow-hidden border-r border-b border-[#999]">
        <SheetTable />
        <div className="pointer-events-none absolute top-[19px] left-[1388px] h-[23px] w-[71px] border-2 border-[#227447]">
          <span className="absolute -right-[3px] -bottom-[3px] h-[6px] w-[6px] border-t border-l border-white bg-[#227447]" />
        </div>
        <Annotations />
      </div>
      <div className="mx-[3px] flex flex-col pt-[2px]">
        <ScrollArrow label="向上滚动" d="M0 7h9L4.500 2z" />
        <div className="flex min-h-0 flex-1 flex-col bg-[#dadada]">
          <div className="mb-5 flex-1 border border-[#ababab] bg-white" />
        </div>
        <ScrollArrow label="向下滚动" d="M0 2h9L4.500 7z" />
      </div>
    </main>
  );
}

function SheetBar() {
  return (
    <div className="flex h-7 shrink-0 items-start border-b border-[#c0c0c0] bg-[#e6e6e6]">
      <button type="button" aria-label="上一张工作表" className="mt-2 ml-7">
        <svg width="5" height="10" viewBox="0 0 5 10" fill="#bdbdbd">
          <path d="M5 0v10L0 5z" />
        </svg>
      </button>
      <button type="button" aria-label="下一张工作表" className="mt-2 ml-6">
        <svg width="5" height="10" viewBox="0 0 5 10" fill="#bdbdbd">
          <path d="M0 0v10l5-5z" />
        </svg>
      </button>
      <button
        type="button"
        className="relative -mt-px ml-[41px] h-[26px] w-[58px] border-x border-b-2 border-x-[#999] border-b-[#227447] bg-white pb-[3px] text-[17px] leading-5 text-[#227447]"
      >
        时间
      </button>
      <button type="button" aria-label="新工作表" className="mt-1 ml-[33px]">
        <svg width="20" height="20" viewBox="0 0 20 20" fill="none" stroke="#777">
          <circle cx="10" cy="10" r="9.300" strokeWidth="1.300" />
          <path d="M10 5v10M5 10h10" strokeWidth="2" />
        </svg>
      </button>
      <div className="mt-1 mr-[25px] ml-auto flex w-[746px] items-center">
        <span className="mr-[15px] flex w-[3px] flex-col gap-[2px]">
          <i className="h-[3px] bg-[#b5b5b5]" />
          <i className="h-[3px] bg-[#b5b5b5]" />
          <i className="h-[3px] bg-[#b5b5b5]" />
        </span>
        <ScrollArrow label="向左滚动" d="M7 0v9L2 4.500z" />
        <div className="flex h-[19px] flex-1 bg-[#dadada]">
          <div className="mr-[26px] flex-1 border border-[#ababab] bg-white" />
        </div>
        <ScrollArrow label="向右滚动" d="M2 0v9l5-4.500z" />
      </div>
    </div>
  );
}

function StatusBar() {
  return (
    <footer className="relative flex h-7 shrink-0 flex-col bg-[#f0f0f0] text-[#555]">
      <div className="flex h-[27px] items-center">
        <span className="ml-[7px] pb-[3px]">就绪</span>
        <button type="button" aria-label="普通" className="ml-auto flex h-full w-[41px] items-center justify-center bg-[#c6c6c6]">
          <svg width="13" height="13" viewBox="0 0 13 13" fill="none" stroke="#666">
            <path d="M.5.500h12v12H.5zM4.500 0v13M8.500 0v13M0 4.500h13M0 8.500h13" />
          </svg>
        </button>
        <button type="button" aria-label="页面布局" className="flex h-full w-[41px] items-center justify-center">
          <svg width="14" height="13" viewBox="0 0 14 13" fill="none" stroke="#666">
            <path d="M.5.500h13v12H.5zM3.500 2.500h7v8h-7zM5 4.500h4M5 6.500h4M5 8.500h4" />
          </svg>
        </button>
        <button type="button" aria-label="分页预览" className="flex h-full w-[41px] items-center justify-center">
          <svg width="14" height="13" viewBox="0 0 14 13" fill="none" stroke="#666">
            <path d="M.5.500h13v12H.5zM5.500 1v6.500M9.500 1v6.500M1 7.500h8.500" />
          </svg>
        </button>
        <button type="button" aria-label="缩小" className="ml-[5px] h-[2px] w-[9px] bg-[#666]" />
        <div className="ml-2 flex h-3 w-[128px] items-center">
          <span className="h-px w-[46px] bg-[#aaa]" />
          <span className="h-[13px] w-[5px] bg-[#666]" />
          <span className="h-px flex-1 bg-[#aaa]" />
        </div>
        <button type="button" aria-label="放大" className="ml-px">
          <svg width="9" height="9" viewBox="0 0 9 9" stroke="#555" strokeWidth="2">
            <path d="M4.500 0v9M0 4.500h9" />
          </svg>
        </button>
        <button type="button" className="mr-4 ml-[15px] w-[33px] text-center whitespace-nowrap">
          85%
        </button>
      </div>
      <div className="flex h-px">
        <span className="w-[60px] bg-[#1e3a4a]" />
        <span className="w-[360px] bg-[#c0c0c0]" />
        <span className="flex-1 bg-[#1f3247]" />
      </div>
      <span className="pointer-events-none absolute -top-1 right-[14px] text-[20px] leading-6 whitespace-nowrap text-[#8c8c8c]">
        CSDN @你真的好哇塞
      </span>
    </footer>
  );
}

export default function App() {
  return (
    <div className="flex h-screen flex-col overflow-hidden bg-[#e6e6e6] font-['Noto_Sans_CJK_SC','Microsoft_YaHei',sans-serif] text-[15px] leading-5 font-[350]">
      <TitleBar />
      <RibbonTabs />
      <Ribbon />
      <FormulaBar />
      <Sheet />
      <SheetBar />
      <StatusBar />
    </div>
  );
}
